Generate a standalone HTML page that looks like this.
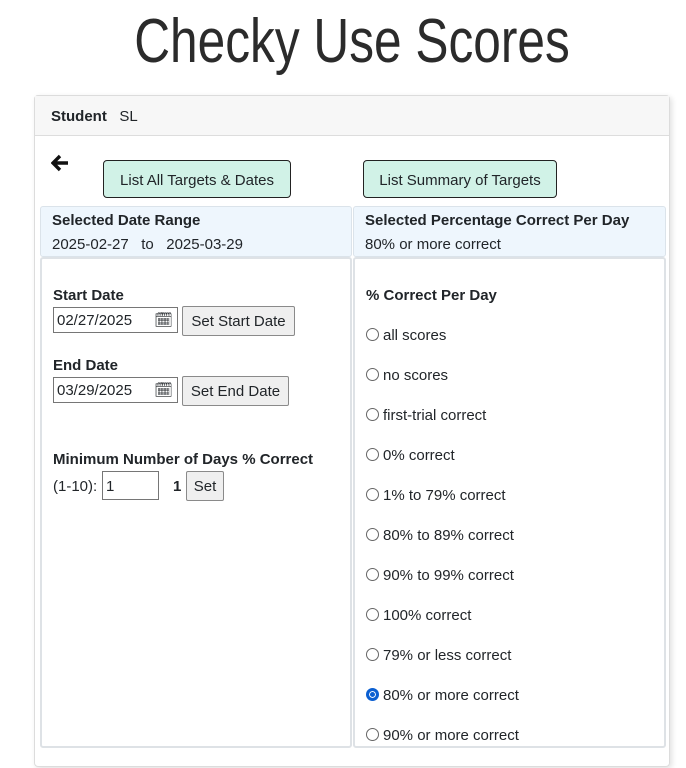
<!DOCTYPE html>
<html><head><style>
body{margin:0;width:686px;height:768px;background:#fff;font-family:"Liberation Sans",sans-serif;color:#212529;position:relative;overflow:hidden;font-size:15px}
.a{position:absolute}
h1{position:absolute;left:0;width:704px;top:4px;margin:0;text-align:center;font-weight:300;font-size:62px;color:#2b2b2b;transform:scaleX(0.8);transform-origin:352px 0;line-height:76px}
.card{left:34px;top:95px;width:634px;height:670px;border:1px solid #dcdcdc;border-radius:4px;box-shadow:2px 2px 6px rgba(0,0,0,.12)}
.ch{left:35px;top:96px;width:634px;height:39px;background:#f7f7f7;border-bottom:1px solid #ddd}
.btn{border:1px solid #222;border-radius:4px;background:#d1f2e7;font-size:15px;text-align:center;line-height:39px;height:36px}
.ph{background:#eef6fd;border:1px solid #dbe3ea;border-radius:3px}
.pb{border:2px solid #dee2e6;border-radius:3px;background:#fff}
.inp{border:1px solid #767676;height:26px;line-height:26px;padding-left:3px;font-size:15px;box-sizing:border-box}
.gb{border:1px solid #8a8a8a;border-radius:2px;background:#efefef;height:30px;line-height:29px;text-align:center;box-sizing:border-box}
.r{left:366px;font-size:15px}
.r i{display:inline-block;width:13px;height:13px;border:1px solid #666;border-radius:50%;vertical-align:-1px;margin-right:4px;box-sizing:border-box}
</style></head><body>
<h1>Checky Use Scores</h1>
<div class="a card"></div>
<div class="a ch"></div>
<div class="a" style="left:51px;top:108px"><b>Student</b>&nbsp;&nbsp; SL</div>
<svg class="a" style="left:51px;top:154px" width="18" height="18" viewBox="0 0 18 18"><path d="M9 2 L2 9 L9 16 M2 9 H17" stroke="#111" stroke-width="3.4" fill="none"/></svg>
<div class="a btn" style="left:103px;top:160px;width:186px">List All Targets &amp; Dates</div>
<div class="a btn" style="left:363px;top:160px;width:192px">List Summary of Targets</div>
<div class="a ph" style="left:40px;top:206px;width:310px;height:49px"></div>
<div class="a ph" style="left:353px;top:206px;width:311px;height:49px"></div>
<div class="a" style="left:52px;top:212px"><b>Selected Date Range</b></div>
<div class="a" style="left:52px;top:236px">2025-02-27&nbsp;&nbsp; to &nbsp;&nbsp;2025-03-29</div>
<div class="a" style="left:365px;top:212px"><b>Selected Percentage Correct Per Day</b></div>
<div class="a" style="left:365px;top:236px">80% or more correct</div>
<div class="a pb" style="left:40px;top:257px;width:308px;height:487px"></div>
<div class="a pb" style="left:353px;top:257px;width:309px;height:487px"></div>
<div class="a" style="left:53px;top:287px"><b>Start Date</b></div>
<div class="a inp" style="left:53px;top:307px;width:125px">02/27/2025<span style="position:absolute;right:4px;top:0">&#x1F5D3;</span></div>
<div class="a gb" style="left:182px;top:306px;width:113px">Set Start Date</div>
<div class="a" style="left:53px;top:357px"><b>End Date</b></div>
<div class="a inp" style="left:53px;top:377px;width:125px">03/29/2025<span style="position:absolute;right:4px;top:0">&#x1F5D3;</span></div>
<div class="a gb" style="left:182px;top:376px;width:107px">Set End Date</div>
<div class="a" style="left:53px;top:451px"><b>Minimum Number of Days % Correct</b></div>
<div class="a" style="left:53px;top:478px">(1-10):</div>
<div class="a inp" style="left:102px;top:471px;width:57px;height:29px;line-height:29px">1</div>
<div class="a" style="left:173px;top:478px"><b>1</b></div>
<div class="a gb" style="left:186px;top:471px;width:38px">Set</div>
<div class="a" style="left:366px;top:287px"><b>% Correct Per Day</b></div>
<div class="a r" style="top:327px"><i></i>all scores</div>
<div class="a r" style="top:367px"><i></i>no scores</div>
<div class="a r" style="top:407px"><i></i>first-trial correct</div>
<div class="a r" style="top:447px"><i></i>0% correct</div>
<div class="a r" style="top:487px"><i></i>1% to 79% correct</div>
<div class="a r" style="top:527px"><i></i>80% to 89% correct</div>
<div class="a r" style="top:567px"><i></i>90% to 99% correct</div>
<div class="a r" style="top:607px"><i></i>100% correct</div>
<div class="a r" style="top:647px"><i></i>79% or less correct</div>
<div class="a r" style="top:687px"><i style="border:3px solid #0b5fd1;box-shadow:inset 0 0 0 1px #fff;background:#0b5fd1"></i>80% or more correct</div>
<div class="a r" style="top:727px"><i></i>90% or more correct</div>
</body></html>
